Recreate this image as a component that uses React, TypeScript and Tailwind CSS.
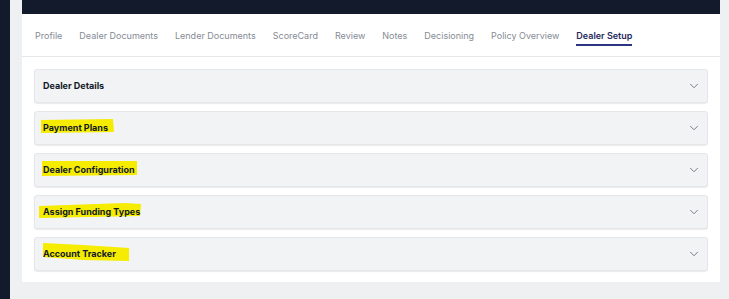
import React from "react";
import { ChevronDown } from "lucide-react";

const tabs = [
  { id: 1, name: "Profile" },
  { id: 2, name: "Dealer Documents" },
  { id: 3, name: "Lender Documents" },
  { id: 4, name: "ScoreCard" },
  { id: 5, name: "Review" },
  { id: 6, name: "Notes" },
  { id: 7, name: "Decisioning" },
  { id: 8, name: "Policy Overview" },
  { id: 9, name: "Dealer Setup", active: true },
];

// marker highlights drawn over the screenshot
const sections = [
  { id: 1, name: "Dealer Details", mark: "" },
  { id: 2, name: "Payment Plans", mark: "M-2 1 L70 0 L71 13 L-2 14 Z" },
  { id: 3, name: "Dealer Configuration", mark: "M-1 0 L94 0 L94 14 L-1 15 Z" },
  { id: 4, name: "Assign Funding Types", mark: "M-4 3 L82 0 L98 1 L97 13 L-4 15 Z" },
  { id: 5, name: "Account Tracker", mark: "M0 -2 L40 0 L86 3 L86 16 L40 15 L0 12 Z" },
];

const App = () => {
  return (
    <div className="flex h-[299px] w-[729px] bg-[#eff0f2] font-['Inter',sans-serif]">
      <div className="w-[10px] bg-[#121a2c]" />
      <div className="ml-[12px] flex h-[282px] w-[698px] flex-col">
        <div className="h-[14px] bg-[#121a2c]" />
        <div className="flex flex-1 flex-col bg-white">
          <nav className="flex h-[43px] items-center gap-x-[17px] border-b border-[#e5e7eb] pl-[13px] pt-[2px] text-[9px] text-[#868b94]">
            {tabs.map((tab) =>
              tab.active ? (
                <span
                  key={tab.id}
                  className="border-b-2 border-[#2b3584] pb-[1px] pt-[3px] font-semibold text-[#1f2a5b]"
                >
                  {tab.name}
                </span>
              ) : (
                <span key={tab.id}>{tab.name}</span>
              )
            )}
          </nav>
          <div className="flex flex-col gap-y-[8px] px-[12px] pb-[11px] pt-[12px]">
            {sections.map((item) => (
              <div
                key={item.id}
                className="flex h-[34px] items-center justify-between rounded-[3px] border border-[#e4e6ea] bg-[#f2f3f5] pl-[8px] pr-[6px] shadow-[0_1px_1px_rgba(0,0,0,0.08)]"
              >
                <span className="relative text-[9px] font-bold text-[#111827]">
                  {item.mark && (
                    <svg
                      className="absolute left-0 top-[-2px] h-[16px] w-[100px] overflow-visible"
                      viewBox="0 0 100 16"
                    >
                      <path d={item.mark} fill="#f5ec00" />
                    </svg>
                  )}
                  <span className="relative">{item.name}</span>
                </span>
                <ChevronDown className="h-[14px] w-[14px] text-[#5b6270]" strokeWidth={1.4} />
              </div>
            ))}
          </div>
        </div>
      </div>
    </div>
  );
};

export default App;
